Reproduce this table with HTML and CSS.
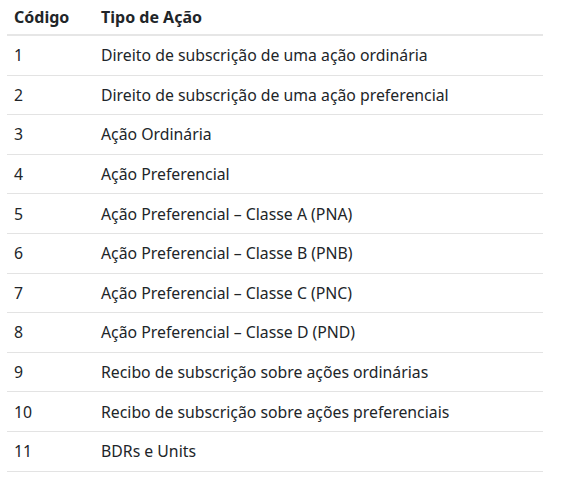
FILE: index.html
```html
<!DOCTYPE html>
<html lang="pt">
<head>
<meta charset="utf-8">
<link rel="stylesheet" href="styles.css">
</head>
<body>
<table class="tbl">
<thead>
<tr><th class="c1">Código</th><th>Tipo de Ação</th></tr>
</thead>
<tbody>
<tr><td class="c1">1</td><td>Direito de subscrição de uma ação ordinária</td></tr>
<tr><td class="c1">2</td><td>Direito de subscrição de uma ação preferencial</td></tr>
<tr><td class="c1">3</td><td>Ação Ordinária</td></tr>
<tr><td class="c1">4</td><td>Ação Preferencial</td></tr>
<tr><td class="c1">5</td><td>Ação Preferencial – Classe A (PNA)</td></tr>
<tr><td class="c1">6</td><td>Ação Preferencial – Classe B (PNB)</td></tr>
<tr><td class="c1">7</td><td>Ação Preferencial – Classe C (PNC)</td></tr>
<tr><td class="c1">8</td><td>Ação Preferencial – Classe D (PND)</td></tr>
<tr><td class="c1">9</td><td>Recibo de subscrição sobre ações ordinárias</td></tr>
<tr><td class="c1">10</td><td>Recibo de subscrição sobre ações preferenciais</td></tr>
<tr><td class="c1">11</td><td>BDRs e Units</td></tr>
</tbody>
</table>
</body>
</html>
```
FILE: styles.css
```css
html, body { margin: 0; padding: 0; background: #fff; }
body {
  padding: 0 24px 0 7px;
  font-family: "Noto Sans", "Open Sans", sans-serif;
  font-size: 15.8px;
  color: #212529;
}
.tbl {
  width: 536px;
  border-collapse: collapse;
  table-layout: fixed;
}
.tbl th, .tbl td {
  text-align: left;
  padding: 0 7px;
  vertical-align: middle;
}
.tbl th {
  font-weight: 700;
  font-size: 16px;
  height: 34px;
  border-bottom: 2px solid #e6e6e6;
}
.tbl td {
  height: 38.6px;
  border-bottom: 1px solid #e3e3e3;
}
.tbl .c1 { width: 73px; }
```
